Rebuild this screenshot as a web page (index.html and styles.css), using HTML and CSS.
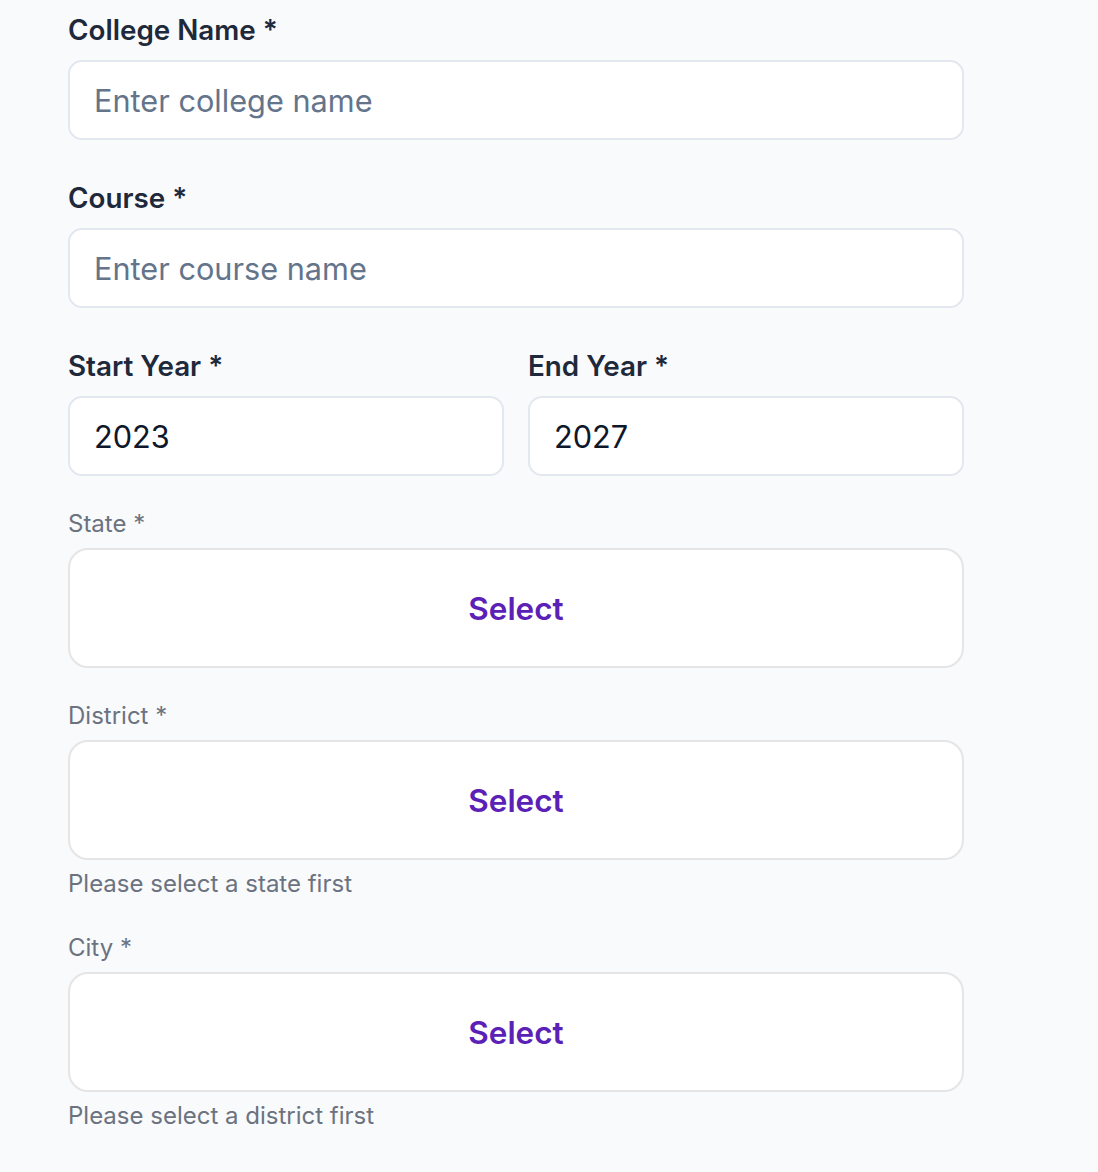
FILE: index.html
```html
<!DOCTYPE html>
<html lang="en">
<head>
<meta charset="utf-8">
<title>Education form</title>
<link rel="stylesheet" href="styles.css">
</head>
<body>
<form class="form">
  <div class="field">
    <label class="label">College Name *</label>
    <input class="input" type="text" placeholder="Enter college name">
  </div>
  <div class="field">
    <label class="label">Course *</label>
    <input class="input" type="text" placeholder="Enter course name">
  </div>
  <div class="row">
    <div class="field">
      <label class="label">Start Year *</label>
      <input class="input" type="text" value="2023">
    </div>
    <div class="field">
      <label class="label">End Year *</label>
      <input class="input" type="text" value="2027">
    </div>
  </div>
  <div class="pick">
    <div class="pick-label">State *</div>
    <div class="select-box"><span class="select-text">Select</span></div>
  </div>
  <div class="pick">
    <div class="pick-label">District *</div>
    <div class="select-box"><span class="select-text">Select</span></div>
    <div class="hint">Please select a state first</div>
  </div>
  <div class="pick">
    <div class="pick-label">City *</div>
    <div class="select-box"><span class="select-text">Select</span></div>
    <div class="hint">Please select a district first</div>
  </div>
</form>
</body>
</html>
```

FILE: styles.css
```css
* { box-sizing: border-box; }
html, body {
  margin: 0;
  background: #f9fafb;
  font-family: Inter, "Noto Sans", "Liberation Sans", sans-serif;
}
.form {
  width: 896px;
  margin-left: 68px;
  padding-top: 10px;
  display: flex;
  flex-direction: column;
}
.field {
  display: flex;
  flex-direction: column;
  margin-bottom: 38px;
}
.row {
  display: grid;
  grid-template-columns: 1fr 1fr;
  column-gap: 24px;
}
.row .field { margin-bottom: 32px; }
.label {
  font-size: 27.8px;
  line-height: 40px;
  font-weight: 600;
  color: #1e293b;
  margin-bottom: 10px;
}
.input {
  height: 80px;
  width: 100%;
  border: 2px solid #e2e8f0;
  border-radius: 14px;
  background: #fff;
  padding: 0 24px;
  font-family: inherit;
  font-size: 30.7px;
  color: #0f172a;
  outline: none;
}
.input::placeholder { color: #64748b; }
.pick {
  display: flex;
  flex-direction: column;
  margin-bottom: 32px;
}
.pick-label {
  font-size: 24px;
  line-height: 32px;
  color: #6b7280;
  margin-bottom: 8px;
}
.select-box {
  height: 120px;
  border: 2px solid #e5e5e5;
  border-radius: 20px;
  background: #fff;
  display: flex;
  align-items: center;
  justify-content: center;
}
.select-text {
  font-size: 31.5px;
  font-weight: 600;
  color: #5b21b6;
}
.hint {
  margin-top: 8px;
  font-size: 24px;
  line-height: 32px;
  color: #6b7280;
}
```
